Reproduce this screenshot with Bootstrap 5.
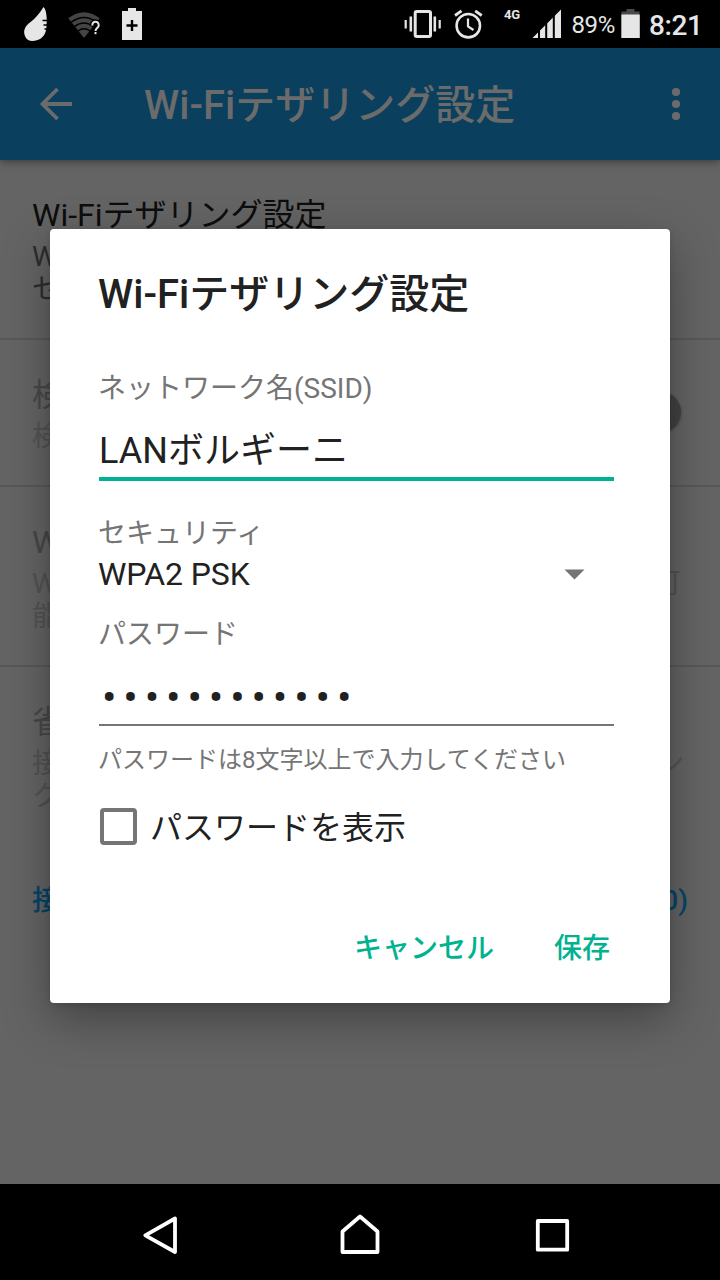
<!DOCTYPE html>
<html lang="ja">
<head>
<meta charset="utf-8">
<meta name="viewport" content="width=device-width, initial-scale=1">
<title>Wi-Fiテザリング設定</title>
<link rel="stylesheet" href="https://cdn.jsdelivr.net/npm/bootstrap@5.3.0/dist/css/bootstrap.min.css">
<style>
body{font-family:Roboto,"Noto Sans CJK JP",sans-serif;background:#646464;color:#212121;overflow:hidden}
svg{display:block;flex:none}
.phone{width:720px;height:1280px}
.statusbar{height:48px;color:#e6e6e6}
.net{width:18px;height:28px;font-size:13px;line-height:29px;font-weight:700;margin-left:21px;margin-right:1px;letter-spacing:-.2px}
.pct{width:45px;font-size:24px;line-height:51px;margin-left:9.5px;margin-right:.5px;letter-spacing:-.4px}
.clock{font-size:28px;line-height:51px;font-weight:500;margin-left:8px;width:71px;letter-spacing:-.4px}
.appbar{height:112px;background:#0a3f5e;color:#6b6b6b;box-shadow:0 2px 8px rgba(0,0,0,.4);z-index:1;padding:0 38px 0 39px}
.apptitle{font-size:40px;line-height:48px;font-weight:500;margin-left:71px;padding-top:4px}
.prefs{background:#646464;padding:0}
.pref{padding:0 32px;border-bottom:2px solid #585858}
.ptitle{font-size:32px;line-height:40px;height:40px}
.psum{font-size:28px;line-height:33px;height:33px}
.dis1{color:#484848}.dis2{color:#535353}
.knob{width:40px;height:40px;background:#424242;box-shadow:0 1px 3px rgba(0,0,0,.35);margin:17px 7px 0 0}
.count{color:#044569;font-size:28px;line-height:36px;font-weight:500}
.dlg{position:absolute;left:50px;top:229px;width:620px;height:774px;background:#fff;border-radius:4px;z-index:2;padding:41px 56px 0 48px;box-shadow:0 16px 46px rgba(0,0,0,.34),0 2px 6px rgba(0,0,0,.12)}
.dtitle{font-size:40px;line-height:50px;height:48px;font-weight:500;margin:0}
.flabel{font-size:28px;line-height:37px;height:34px;color:#757575;display:block}
.ssid{font-size:36px;line-height:51px;height:55px;margin:22px 0 0 1px;border-bottom:4px solid #00b294}
.sel{font-size:32px;line-height:40px;margin-top:5px;padding-right:29px;letter-spacing:-.1px}
.pw{font-size:43px;line-height:49px;height:53px;margin:23px 0 0 1px;border-bottom:2px solid #757575;letter-spacing:6.85px;padding-left:3px}
.hint{font-size:24px;line-height:31px;height:30px;margin-top:19px;color:#757575;white-space:nowrap}
.box{width:37px;height:37px;border:4px solid #757575;border-radius:4px;margin-left:2px;margin-top:-2px}
.chk{font-size:32px;line-height:42px;height:40px}
.act{font-size:28px;line-height:36px;font-weight:500;color:#00b28f;padding:1px 0 0;border:0;background:none}
.navbtns{height:96px}
</style>
</head>
<body>
<div class="phone position-relative d-flex flex-column">
  <header class="statusbar bg-black d-flex align-items-start">
    <svg width="150" height="48" viewBox="0 0 150 48">
      <path d="M43.500 7C39 14 35 19 30 22.500C25 26 24 30 24.200 33C24.800 38 28 41 32 41C40 41 46.500 36 46.500 26C47.200 18 46.500 10 43.500 7Z" fill="#e6e6e6"/>
      <path d="M42.500 20.500h6M43.500 25h4M44.500 29h4" stroke="#000" stroke-width="1.4"/>
      <path d="M84 38L68.300 18.300Q84 6 99.700 18.300Z" fill="#444"/>
      <path d="M71 22.300Q84 12.500 97 22.300M74.500 26.700Q84 19.500 93.500 26.700M78 31Q84 26.500 90 31" fill="none" stroke="#000" stroke-width="1.5"/>
      <path d="M92.300 25.500c0-5 6.400-5 6.400 0c0 2.500-3.200 2.700-3.200 5.500v3" fill="none" stroke="#000" stroke-width="5"/>
      <path d="M92.300 25.500c0-5 6.400-5 6.400 0c0 2.500-3.200 2.700-3.200 5.500" fill="none" stroke="#e6e6e6" stroke-width="2"/>
      <path d="M94.500 32h2v2.200h-2z" fill="#e6e6e6"/>
      <path d="M128 8h8v3h6v29h-20V11h6z" fill="#e6e6e6"/>
      <path d="M132 20v11M126.500 25.500h11" stroke="#000" stroke-width="2.400"/>
    </svg>
    <svg class="ms-auto" width="80" height="48" viewBox="403 0 80 48" fill="none" stroke="#e6e6e6">
      <rect x="415.200" y="11.500" width="15.300" height="25" rx="1.500" stroke-width="3"/>
      <path d="M410.800 16.500v15M434.800 16.500v15" stroke-width="2.600"/>
      <path d="M405.700 20v8.500M439.700 20v8.500" stroke-width="2.200"/>
      <circle cx="468.300" cy="25.700" r="11.700" stroke-width="2.600"/>
      <path d="M468 18.500v8l5.500 3.500" stroke-width="2.200"/>
      <path d="M455 15.500l6.500-4.700M475.200 10.800l6.500 4.700" stroke-width="2.800"/>
    </svg>
    <span class="net">4G</span>
    <svg width="30" height="48" viewBox="532 0 30 48" style="margin-left:9px">
      <path d="M532.500 38L561 9.500V38Z" fill="#e6e6e6"/>
      <path d="M539 10v29M546.200 10v29M553.800 10v29" stroke="#000" stroke-width="2"/>
    </svg>
    <span class="pct">89%</span>
    <svg width="20" height="48" viewBox="621 0 20 48" style="margin-left:4px">
      <path d="M626.500 9h8v2.500h5V15h-18v-3.500h5z" fill="#4a4a4a"/><path d="M621.300 14.500h18.500V38h-18.500z" fill="#e6e6e6"/>
    </svg>
    <span class="clock">8:21</span>
  </header>

  <div class="appbar d-flex align-items-center position-relative">
    <svg width="34" height="34" viewBox="39 87 34 34" fill="none" stroke="#6b6b6b" stroke-width="3.800"><path d="M72 104H43M57.500 89L42.500 104L57.500 119"/></svg>
    <span class="apptitle">Wi-Fiテザリング設定</span>
    <svg class="ms-auto" width="12" height="34" viewBox="0 0 12 34" fill="#6b6b6b"><circle cx="6" cy="5" r="4.100"/><circle cx="6" cy="17" r="4.100"/><circle cx="6" cy="29" r="4.100"/></svg>
  </div>

  <main class="prefs flex-grow-1">
    <section class="pref" style="height:180px;padding-top:35px">
      <div class="ptitle" style="color:#0d0d0d">Wi-Fiテザリング設定</div>
      <div class="psum" style="color:#2d2d2d;margin-top:5px">W</div>
      <div class="psum" style="color:#2d2d2d">セ</div>
    </section>
    <section class="pref d-flex justify-content-between" style="height:147px;padding-top:35px">
      <div>
        <div class="ptitle dis1">検</div>
        <div class="psum dis2" style="margin-top:5px">検</div>
      </div>
      <div class="knob rounded-circle"></div>
    </section>
    <section class="pref" style="height:180px;padding-top:35px">
      <div class="ptitle dis1">W</div>
      <div class="psum dis2 d-flex justify-content-between" style="margin-top:5px;padding-right:7px"><span>W</span><span>可</span></div>
      <div class="psum dis2">能</div>
    </section>
    <section class="pref border-0" style="height:180px;padding-top:35px">
      <div class="ptitle dis1">省</div>
      <div class="psum dis2 d-flex justify-content-between" style="margin-top:5px;padding-right:4px"><span>接</span><span>ン</span></div>
      <div class="psum dis2">ク</div>
    </section>
    <div class="count d-flex justify-content-between" style="padding:36px 32px 0"><span>接</span><span>0)</span></div>
  </main>

  <footer class="navbtns bg-black">
    <svg width="720" height="96" viewBox="0 1184 720 96" fill="none" stroke="#fff" stroke-width="3.800" stroke-linejoin="round">
      <path d="M175 1218.500V1252L145.300 1235.300Z"/>
      <path d="M342.500 1252V1231.500L360 1216.500L377.500 1231.500V1252Z"/>
      <rect x="537.800" y="1221" width="29.400" height="28.700"/>
    </svg>
  </footer>

  <div class="dlg" role="dialog">
    <h1 class="dtitle">Wi-Fiテザリング設定</h1>
    <span class="flabel" style="margin-top:52px">ネットワーク名(SSID)</span>
    <div class="ssid">LANボルギーニ</div>
    <span class="flabel" style="margin-top:34px">セキュリティ</span>
    <div class="sel d-flex align-items-center justify-content-between"><span>WPA2 PSK</span>
      <svg width="21" height="11" viewBox="0 0 21 11"><path d="M.5.500h20l-10 10z" fill="#757575"/></svg></div>
    <span class="flabel" style="margin-top:22px">パスワード</span>
    <div class="pw">••••••••••••</div>
    <div class="hint">パスワードは8文字以上で入力してください</div>
    <div class="d-flex align-items-center" style="margin-top:32px;gap:13px"><span class="box"></span><span class="chk">パスワードを表示</span></div>
    <div class="d-flex justify-content-end" style="margin-top:83px;gap:60px;padding-right:4px">
      <button class="act" type="button">キャンセル</button><button class="act" type="button">保存</button>
    </div>
  </div>
</div>
<script src="https://cdn.jsdelivr.net/npm/bootstrap@5.3.0/dist/js/bootstrap.bundle.min.js"></script>
</body>
</html>
